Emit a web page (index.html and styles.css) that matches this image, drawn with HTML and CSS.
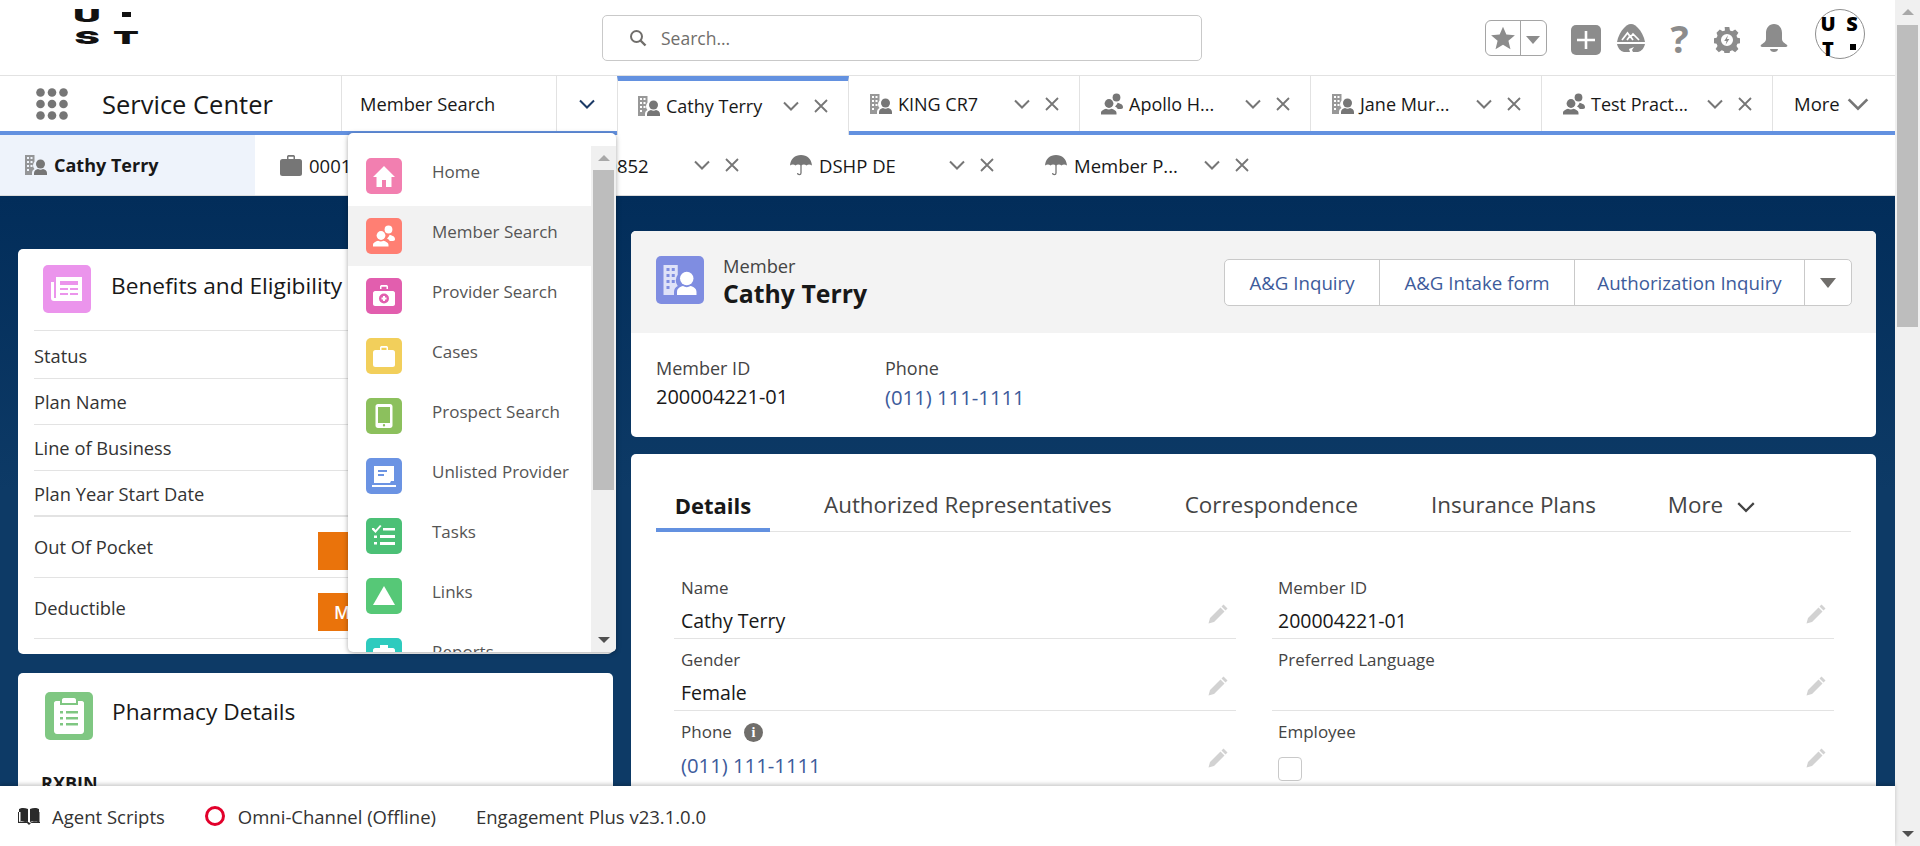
FILE: index.html
```html
<!DOCTYPE html>
<html lang="en">
<head>
<title>Service Center</title>
<meta charset="utf-8" />
<link rel="stylesheet" href="styles.css">
</head>
<body>
<!-- shared icons -->
<svg class="defs" width="0" height="0">
  <symbol id="i-member" viewBox="0 0 24 24"><path opacity=".75" fill-rule="evenodd" d="M1 2h9.500v6.500a6 6 0 0 0 0 7.500c-1.500.7-2.500 2-2.500 4v2H1zM3 4v2h2V4zM6.500 4v2h2V4zM3 8v2h2V8zM6.500 8v2h2V8zM3 12v2h2v-2zM6.500 12v2h2v-2zM3 16v2h2v-2z"/><circle cx="16.500" cy="11" r="4.500"/><path d="M10 22v-2c0-2.500 2-3.500 4-4 1.500 1 3.500 1 5 0 2 .5 4 1.500 4 4v2z"/></symbol>
  <symbol id="i-people" viewBox="0 0 24 24"><circle cx="16.500" cy="5.500" r="3.900"/><path d="M17.500 10.800c2 .9 5.500 1 5.500 4.500 0 1-.7 1.700-2 1.700h-3.200c-.6-1.100-1.600-2-2.800-2.600.9-.8 2.300-2 2.500-3.600z"/><circle cx="9" cy="11.500" r="4.400"/><path d="M1 22.500V21c0-2.800 3-3.500 5-4.300 1.800 1 3.800 1 5.500 0 2 .8 5 1.500 5 4.300v1.500z"/></symbol>
  <symbol id="i-umbrella" viewBox="0 0 24 24"><path d="M12 2C6 2 1.500 6 1 12.500c2-1.500 4-1.500 5.500 0 1.500-1.500 3.500-1.500 5.500 0 2-1.500 4-1.500 5.500 0 1.500-1.500 3.500-1.500 5.500 0C22.500 6 18 2 12 2z"/><path d="M12 12v8a1.700 1.700 0 0 1-3.400 0" fill="none" stroke="currentColor" stroke-width="1.300"/></symbol>
  <symbol id="i-case" viewBox="0 0 24 24"><path d="M8 6V3.500C8 2.500 9 2 10 2h4c1 0 2 .5 2 1.500V6h-1.500V3.700h-5V6z"/><rect x="1" y="6" width="22" height="17" rx="2.500"/></symbol>
  <symbol id="i-chevron" viewBox="0 0 18 18"><path d="M2 5.500l7 7 7-7" fill="none" stroke="currentColor" stroke-width="2"/></symbol>
  <symbol id="i-close" viewBox="0 0 14 14"><path d="M1 1l12 12M13 1L1 13" fill="none" stroke="currentColor" stroke-width="1.800"/></symbol>
  <symbol id="i-pencil" viewBox="0 0 22 22"><path d="M16.500 1.500l4 4-2 2-4-4zM13.500 4.500l4 4L7 19l-5.500 1.500L3 15z"/></symbol>
</svg>

<div class="page">
  <div class="app">
    <header class="topbar">
      <div class="logo">
        <span>U</span><i></i>
        <span>S</span><span>T</span>
      </div>
      <label class="search">
        <svg width="18" height="18" viewBox="0 0 18 18"><circle cx="7.500" cy="7.500" r="5.500" fill="none" stroke="#706e6b" stroke-width="2"/><path d="M11.500 11.500l5 5" stroke="#706e6b" stroke-width="2.400"/></svg>
        <span>Search...</span>
      </label>
      <div class="tools">
        <div class="fav">
          <span class="fav-star"><svg width="26" height="26" viewBox="0 0 24 24"><path fill="#8c8c8c" d="M12 1.500l3.100 7.300 7.900.6-6 5.200 1.900 7.700L12 18.200l-6.900 4.100L7 14.600 1 9.400l7.900-.6z"/></svg></span>
          <span class="fav-caret"></span>
        </div>
        <svg class="tool-plus" width="30" height="30" viewBox="0 0 30 30"><rect width="30" height="30" rx="5" fill="#8c8c8c"/><path d="M15 6v18M6 15h18" stroke="#fff" stroke-width="2.600"/></svg>
        <svg class="tool-trail" width="28" height="28" viewBox="0 0 28 28"><path fill="#8c8c8c" d="M14 0c3 0 5 2 7 4 3 3 6 8 7 14H0C1 12 4 7 7 4c2-2 4-4 7-4z"/><path d="M5 16l5.500-7 3 4 2.500-3 6 6M10 16l3-4 3 4" fill="none" stroke="#fff" stroke-width="1.700"/><path fill="#8c8c8c" d="M0 20h28c-1 4-3 7-7 8h-5l-1-2 2-3-5 2 1 3H7c-4-1-6-4-7-8z"/></svg>
        <span class="tool-help">?</span>
        <svg class="tool-gear" width="26" height="26" viewBox="0 0 28 28"><path fill="#8c8c8c" fill-rule="evenodd" d="M11.500 0h5l.7 3.700 2.400 1 3.200-2.100 3.500 3.500-2.100 3.200 1 2.400 3.700.7v5l-3.700.7-1 2.400 2.100 3.200-3.500 3.500-3.200-2.100-2.400 1-.7 3.700h-5l-.7-3.700-2.400-1-3.200 2.100-3.500-3.500 2.100-3.200-1-2.400-3.700-.7v-5l3.700-.7 1-2.400L2.700 6.100l3.500-3.500 3.200 2.100 2.400-1zM14 7.500a6.500 6.500 0 1 0 0 13 6.500 6.500 0 0 0 0-13z"/><path fill="#8c8c8c" d="M15 9l-4 6h2.500l-1 4 4-6H14z"/></svg>
        <svg class="tool-bell" width="28" height="28" viewBox="0 0 28 28"><path fill="#8c8c8c" d="M14 0c5 0 8 4 8 9v6c0 3 3 4 5 6 1 1 0 2-1 2H2c-1 0-2-1-1-2 2-2 5-3 5-6V9c0-5 3-9 8-9zM10 25h8c0 2-2 3-4 3s-4-1-4-3z"/></svg>
        <div class="avatar"><span>U</span><span>S</span><span>T</span><i></i></div>
      </div>
    </header>

    <nav class="navbar">
      <div class="launcher">
        <svg width="32" height="32" viewBox="0 0 32 32" fill="#767676">
          <circle cx="4.500" cy="4.500" r="4.300"/><circle cx="16" cy="4.500" r="4.300"/><circle cx="27.500" cy="4.500" r="4.300"/>
          <circle cx="4.500" cy="16" r="4.300"/><circle cx="16" cy="16" r="4.300"/><circle cx="27.500" cy="16" r="4.300"/>
          <circle cx="4.500" cy="27.500" r="4.300"/><circle cx="16" cy="27.500" r="4.300"/><circle cx="27.500" cy="27.500" r="4.300"/>
        </svg>
        <span class="app-name">Service Center</span>
      </div>
      <div class="nav-select">Member Search</div>
      <div class="nav-toggle"><svg class="chev-navy" width="18" height="18"><use href="#i-chevron"/></svg></div>
      <div class="tab tab-active"><svg class="tab-ico"><use href="#i-member"/></svg><span class="tab-name">Cathy Terry</span><svg class="tab-chev"><use href="#i-chevron"/></svg><svg class="tab-x"><use href="#i-close"/></svg></div>
      <div class="tab"><svg class="tab-ico"><use href="#i-member"/></svg><span class="tab-name">KING CR7</span><svg class="tab-chev"><use href="#i-chevron"/></svg><svg class="tab-x"><use href="#i-close"/></svg></div>
      <div class="tab"><svg class="tab-ico"><use href="#i-people"/></svg><span class="tab-name">Apollo H...</span><svg class="tab-chev"><use href="#i-chevron"/></svg><svg class="tab-x"><use href="#i-close"/></svg></div>
      <div class="tab"><svg class="tab-ico"><use href="#i-member"/></svg><span class="tab-name">Jane Mur...</span><svg class="tab-chev"><use href="#i-chevron"/></svg><svg class="tab-x"><use href="#i-close"/></svg></div>
      <div class="tab"><svg class="tab-ico"><use href="#i-people"/></svg><span class="tab-name">Test Pract...</span><svg class="tab-chev"><use href="#i-chevron"/></svg><svg class="tab-x"><use href="#i-close"/></svg></div>
      <div class="nav-more">More <svg width="24" height="24"><use href="#i-chevron"/></svg></div>
    </nav>

    <nav class="subnav">
      <div class="subtab subtab-active"><svg class="tab-ico"><use href="#i-member"/></svg><span class="tab-name">Cathy Terry</span></div>
      <div class="subtab"><svg class="tab-ico"><use href="#i-case"/></svg><span class="tab-name">00010852</span><svg class="tab-chev"><use href="#i-chevron"/></svg><svg class="tab-x"><use href="#i-close"/></svg></div>
      <div class="subtab"><svg class="tab-ico"><use href="#i-case"/></svg><span class="tab-name">00010852</span><svg class="tab-chev"><use href="#i-chevron"/></svg><svg class="tab-x"><use href="#i-close"/></svg></div>
      <div class="subtab"><svg class="tab-ico"><use href="#i-umbrella"/></svg><span class="tab-name">DSHP DE</span><svg class="tab-chev"><use href="#i-chevron"/></svg><svg class="tab-x"><use href="#i-close"/></svg></div>
      <div class="subtab"><svg class="tab-ico"><use href="#i-umbrella"/></svg><span class="tab-name">Member P...</span><svg class="tab-chev"><use href="#i-chevron"/></svg><svg class="tab-x"><use href="#i-close"/></svg></div>
    </nav>

    <main class="content">
      <div class="col-left">
        <section class="card benefits">
          <div class="card-head">
            <span class="badge badge-benefits">
              <svg width="32" height="32" viewBox="0 0 32 32" fill="#fff"><path fill-rule="evenodd" d="M6 3h26v24H4a3 3 0 0 1-3-3V8h3v16h2zM10 7v4h18V7zM10 14v2h8v-2zM20 14v2h8v-2zM10 19v2h8v-2zM20 19v2h8v-2z" transform="translate(-1 1)"/></svg>
            </span>
            <h2>Benefits and Eligibility</h2>
          </div>
          <div class="row r-status">Status</div>
          <div class="row r-plan">Plan Name</div>
          <div class="row r-plan">Line of Business</div>
          <div class="row r-plan r-last">Plan Year Start Date</div>
          <div class="row r-cost">Out Of Pocket<span class="cost"></span></div>
          <div class="row r-cost">Deductible<span class="cost">Member</span></div>
        </section>
        <section class="card pharmacy">
          <div class="card-head">
            <span class="badge badge-pharmacy">
              <svg width="32" height="36" viewBox="0 0 32 36" fill="#fff"><path fill-rule="evenodd" d="M11 0h10c1.500 0 2 1 2 2v3H9V2c0-1 .5-2 2-2zM3 3h4v4h18V3h4c1 0 2 1 2 2v28c0 1.500-1 3-3 3H4c-2 0-3-1.500-3-3V5c0-1 1-2 2-2zM7 13v2.500h3V13zM13 13v2.500h12V13zM7 19v2.500h3V19zM13 19v2.500h12V19zM7 25v2.500h3V25zM13 25v2.500h12V25z"/></svg>
            </span>
            <h2>Pharmacy Details</h2>
          </div>
          <div class="rx">RXBIN</div>
        </section>
      </div>

      <div class="col-right">
        <section class="card record">
          <div class="record-head">
            <span class="badge badge-member"><svg width="36" height="36" fill="#fff"><use href="#i-member"/></svg></span>
            <div class="record-title">
              <div class="record-type">Member</div>
              <div class="record-name">Cathy Terry</div>
            </div>
            <div class="actions">
              <a class="act act-1">A&amp;G Inquiry</a>
              <a class="act act-2">A&amp;G Intake form</a>
              <a class="act act-3">Authorization Inquiry</a>
              <span class="act-more"></span>
            </div>
          </div>
          <div class="record-info">
            <div class="info-id"><div class="info-label">Member ID</div><div class="info-value">200004221-01</div></div>
            <div><div class="info-label">Phone</div><div class="info-value link">(011) 111-1111</div></div>
          </div>
        </section>

        <section class="card details">
          <div class="detail-tabs">
            <span class="dtab dtab-active">Details</span>
            <span class="dtab dtab-auth">Authorized Representatives</span>
            <span class="dtab dtab-corr">Correspondence</span>
            <span class="dtab dtab-ins">Insurance Plans</span>
            <span class="dtab dtab-more">More <svg width="20" height="20"><use href="#i-chevron"/></svg></span>
          </div>
          <div class="fields">
            <div class="field"><div class="f-label">Name</div><div class="f-value">Cathy Terry</div><svg class="pencil"><use href="#i-pencil"/></svg></div>
            <div class="field"><div class="f-label">Member ID</div><div class="f-value">200004221-01</div><svg class="pencil"><use href="#i-pencil"/></svg></div>
            <div class="field"><div class="f-label">Gender</div><div class="f-value">Female</div><svg class="pencil"><use href="#i-pencil"/></svg></div>
            <div class="field"><div class="f-label">Preferred Language</div><div class="f-value"></div><svg class="pencil"><use href="#i-pencil"/></svg></div>
            <div class="field"><div class="f-label">Phone <span class="info-dot">i</span></div><div class="f-value link">(011) 111-1111</div><svg class="pencil"><use href="#i-pencil"/></svg></div>
            <div class="field"><div class="f-label">Employee</div><div class="f-value"><span class="check"></span></div><svg class="pencil"><use href="#i-pencil"/></svg></div>
          </div>
        </section>
      </div>
    </main>

    <footer class="utility">
      <span class="util util-scripts">
        <svg width="22" height="20" viewBox="0 0 22 20" fill="#2b2b2b"><path d="M1 3c2-1.500 6-1.500 9 0v13c-3-1.500-7-1.500-9 0zM12 3c3-1.500 7-1.500 9 0v13c-2-1.500-6-1.500-9 0zM0 6v11h9l2 2 2-2h9V6h-.5v10c-3-1-7-1-9.500 1-2.500-2-6.500-2-9.500-1V6z"/></svg>
        Agent Scripts
      </span>
      <span class="util util-omni"><i class="offline"></i>Omni-Channel (Offline)</span>
      <span class="util">Engagement Plus v23.1.0.0</span>
    </footer>

    <!-- open nav menu, lies over the page -->
    <div class="menu">
      <ul class="menu-list">
        <li class="menu-item"><span class="mi c-home"><svg width="24" height="24" viewBox="0 0 24 24" fill="#fff"><path d="M12 2L1 13h3.500v10H10v-7h4v7h5.500V13H23z"/></svg></span>Home</li>
        <li class="menu-item menu-item-on"><span class="mi c-member"><svg width="24" height="24" fill="#fff"><use href="#i-people"/></svg></span>Member Search</li>
        <li class="menu-item"><span class="mi c-provider"><svg width="24" height="24" viewBox="0 0 24 24" fill="#fff"><path fill-rule="evenodd" d="M8 5V2.500C8 1.500 9 1 10 1h4c1 0 2 .5 2 1.500V5h-1.500V2.800h-5V5zM3 7h18c1 0 2 1 2 2v11c0 1-1 2-2 2H3c-1 0-2-1-2-2V9c0-1 1-2 2-2zM12 9.500a5 5 0 1 0 0 10 5 5 0 0 0 0-10zM11 12h2v1.500h1.500v2H13V17h-2v-1.500H9.500v-2H11z"/></svg></span>Provider Search</li>
        <li class="menu-item"><span class="mi c-cases"><svg width="24" height="24" fill="#fff"><use href="#i-case"/></svg></span>Cases</li>
        <li class="menu-item"><span class="mi c-prospect"><svg width="24" height="24" viewBox="0 0 24 24" fill="#fff"><path fill-rule="evenodd" d="M6 0h12c1.500 0 2.500 1 2.500 2.500v19c0 1.500-1 2.500-2.500 2.500H6c-1.500 0-2.500-1-2.500-2.500v-19C3.500 1 4.500 0 6 0zM6 3v16h12V3zM12 20a1.200 1.200 0 1 0 0 2.400 1.200 1.200 0 0 0 0-2.400z"/></svg></span>Prospect Search</li>
        <li class="menu-item"><span class="mi c-unlisted"><svg width="24" height="24" viewBox="0 0 24 24" fill="#fff"><path fill-rule="evenodd" d="M2 2h20v15h-3l-1 2H2zM6 6v2h9V6zM6 10v2h6v-2zM0 21h24v2H0z"/></svg></span>Unlisted Provider</li>
        <li class="menu-item"><span class="mi c-tasks"><svg width="24" height="24" viewBox="0 0 24 24" fill="#fff"><path d="M0 4l2 0 1.500 2L8 1l1.500 1-6 7L0 5.500zM11 4h12v2.500H11zM2 11.500h3V14H2zM8 11h15v3H8zM2 18h3v2.500H2zM8 18h15v3H8z"/></svg></span>Tasks</li>
        <li class="menu-item"><span class="mi c-links"><svg width="24" height="22" viewBox="0 0 24 22" fill="#fff"><path d="M12 1l11 19H1z"/></svg></span>Links</li>
        <li class="menu-item"><span class="mi c-reports"><svg width="24" height="24" viewBox="0 0 24 24" fill="#fff"><path d="M8 1h8v3H8zM3 4h18c1 0 2 1 2 2v14c0 1-1 2-2 2H3c-1 0-2-1-2-2V6c0-1 1-2 2-2z"/></svg></span>Reports</li>
      </ul>
      <div class="menu-scroll">
        <span class="arrow-up"></span>
        <span class="menu-thumb"></span>
        <span class="arrow-down"></span>
      </div>
    </div>
  </div>

  <aside class="pagebar">
    <span class="arrow-up"></span>
    <span class="pagebar-thumb"></span>
    <span class="arrow-down"></span>
  </aside>
</div>
</body>
</html>
```

FILE: styles.css
```css
*{
  margin:0;
  padding:0;
  box-sizing:border-box;
}
html,body{
  height:100%;
  overflow:hidden;
}
body{
  font-family:"Open Sans","Noto Sans","Liberation Sans",sans-serif;
  font-size:16px;
  color:#181818;
  background:#fff;
}
.defs{
  position:absolute;
}
.page{
  display:flex;
  height:846px;
}
.app{
  position:relative;
  flex:1;
  min-width:0;
  display:flex;
  flex-direction:column;
}

/* top bar */
.topbar{
  height:75px;
  display:flex;
  align-items:flex-start;
  background:#fff;
  flex:none;
}
.logo{
  display:grid;
  grid-template-columns:22px 22px;
  column-gap:17px;
  row-gap:8px;
  margin:9px 0 0 76px;
  width:526px;
  font-family:"Inter","Liberation Sans",sans-serif;
  font-weight:900;
  font-size:18px;
  line-height:14px;
  color:#111;
  text-align:center;
}
.logo span{
  display:block;
  transform:scaleX(2.1);
}
.logo i{
  width:9px;
  height:5px;
  background:#111;
  margin:3px 0 0 7px;
}
.search{
  margin:15px 0 0 0;
  width:600px;
  height:46px;
  border:1px solid #c9c9c9;
  border-radius:5px;
  display:flex;
  align-items:center;
  gap:14px;
  padding-left:26px;
  color:#706e6b;
  font-size:17.500px;
}
.tools{
  flex:1;
  position:relative;
  display:flex;
  align-items:flex-start;
}
.fav{
  margin:20px 0 0 283px;
  width:62px;
  height:36px;
  border:1px solid #a5a5a5;
  border-radius:6px;
  display:flex;
}
.fav-star{
  width:35px;
  display:flex;
  align-items:center;
  justify-content:center;
  border-right:1px solid #a5a5a5;
}
.fav-caret{
  flex:1;
  position:relative;
}
.fav-caret::after{
  content:"";
  position:absolute;
  left:5px;
  top:15px;
  border:7px solid transparent;
  border-top:8px solid #8c8c8c;
  border-bottom:0;
}
.tool-plus{
  margin:25px 0 0 24px;
}
.tool-trail{
  margin:24px 0 0 16px;
}
.tool-help{
  width:21px;
  margin:13px 0 0 24px;
  font-size:38px;
  line-height:50px;
  font-weight:700;
  color:#8c8c8c;
  text-align:center;
}
.tool-gear{
  margin:27px 0 0 24px;
}
.tool-bell{
  margin:24px 0 0 20px;
}
.avatar{
  margin:9px 0 0 27px;
  width:50px;
  height:50px;
  border:1px solid #8f8f8f;
  border-radius:50%;
  display:grid;
  grid-template-columns:24px 24px;
  padding-top:1px;
  font-weight:800;
  font-size:20px;
  line-height:25px;
  color:#000;
  text-align:center;
}
.avatar i{
  width:6px;
  height:6px;
  background:#000;
  margin:8px 0 0 10px;
}

/* main nav with workspace tabs */
.navbar{
  flex:none;
  height:60px;
  display:flex;
  border-top:1px solid #e2e2e2;
  border-bottom:4px solid #6391e0;
  background:#fff;
}
.launcher{
  width:341px;
  display:flex;
  align-items:center;
  padding-left:36px;
  gap:34px;
}
.app-name{
  font-size:25.500px;
}
.nav-select{
  width:216px;
  border-left:1px solid #e2e2e2;
  border-right:1px solid #e2e2e2;
  padding-left:18px;
  line-height:55px;
  font-size:18.300px;
}
.nav-toggle{
  width:60px;
  display:flex;
  align-items:center;
  justify-content:center;
}
.chev-navy{
  color:#1b3a66;
}
.tab{
  width:231px;
  display:flex;
  align-items:center;
  padding:0 20px;
  border-right:1px solid #e2e2e2;
  font-size:18px;
}
.tab-active{
  width:232px;
  height:59px;
  border-top:5px solid #6391e0;
  border-left:1px solid #e2e2e2;
  background:#fff;
  padding:0 20px 4px 19px;
  position:relative;
}
.tab-ico{
  width:24px;
  height:24px;
  flex:none;
  fill:#767676;
  color:#767676;
  margin-right:5px;
}
.tab-name{
  flex:1;
  white-space:nowrap;
}
.tab-chev{
  width:18px;
  height:18px;
  flex:none;
  color:#767676;
}
.tab-x{
  width:14px;
  height:14px;
  flex:none;
  color:#767676;
  margin-left:14px;
}
.nav-more{
  flex:1;
  display:flex;
  align-items:center;
  gap:6px;
  padding-left:21px;
  font-size:18.500px;
}
.nav-more svg{
  color:#767676;
}

/* record sub tabs */
.subnav{
  flex:none;
  height:61px;
  display:flex;
  border-bottom:1px solid #dcdcdc;
  background:#fff;
}
.subtab{
  width:255px;
  display:flex;
  align-items:center;
  padding:0 26px 0 24px;
  font-size:18.500px;
}
.subtab .tab-ico{
  margin-right:6px;
}
.subtab-active{
  background:#eef3fb;
  font-weight:700;
  font-size:18px;
}

/* page body */
.content{
  flex:1;
  min-height:0;
  overflow:hidden;
  display:flex;
  gap:18px;
  padding:35px 19px 0 18px;
  background:linear-gradient(#022d5a,#0d3a66 50%);
}
.col-left{
  width:595px;
  flex:none;
  padding-top:18px;
  display:flex;
  flex-direction:column;
  gap:19px;
}
.col-right{
  flex:1;
  display:flex;
  flex-direction:column;
  gap:17px;
}
.card{
  flex:none;
  background:#fff;
  border-radius:5px;
}
.card-head{
  display:flex;
  align-items:flex-start;
}
.card-head h2{
  font-size:22.700px;
  font-weight:400;
  line-height:30px;
}
.badge{
  flex:none;
  width:48px;
  height:48px;
  border-radius:5px;
  display:flex;
  align-items:center;
  justify-content:center;
}
.badge-benefits{
  background:#eb94ec;
}
.badge-pharmacy{
  background:#7fc782;
}
.badge-member{
  background:#7f8de1;
}
.benefits{
  height:405px;
  padding:16px 0 0 16px;
}
.benefits .card-head{
  height:66px;
  padding-left:9px;
  gap:20px;
  border-bottom:1px solid #e3e3e3;
}
.benefits .card-head h2{
  margin-top:6px;
}
.row{
  display:flex;
  align-items:center;
  border-bottom:1px solid #e3e3e3;
  color:#333;
  font-size:18.300px;
}
.r-status{
  height:48px;
  padding-top:2px;
}
.r-plan{
  height:46px;
}
.r-last{
  border-bottom:2px solid #e3e3e3;
}
.r-cost{
  height:61px;
  padding-bottom:2px;
  position:relative;
}
.cost{
  position:absolute;
  left:284px;
  top:15px;
  width:200px;
  height:38px;
  background:#ea730b;
  color:#fff;
  font-weight:600;
  font-size:18px;
  line-height:38px;
  padding-left:16px;
}
.pharmacy{
  height:200px;
  padding:19px 0 0 27px;
}
.pharmacy .card-head{
  gap:19px;
}
.pharmacy .card-head h2{
  margin-top:5px;
}
.rx{
  margin:31px 0 0 -4px;
  font-size:18px;
  font-weight:700;
}

/* record header */
.record{
  height:206px;
  overflow:hidden;
}
.record-head{
  height:102px;
  background:#f3f3f3;
  display:flex;
  align-items:flex-start;
  padding:25px 24px 0 25px;
}
.record-title{
  margin-left:19px;
  margin-top:-1px;
  flex:1;
}
.record-type{
  font-size:18.300px;
  line-height:22px;
  color:#444;
}
.record-name{
  font-size:24.800px;
  font-weight:700;
  line-height:32px;
}
.actions{
  display:flex;
  height:47px;
  margin-top:3px;
  background:#fff;
  border:1px solid #c9c9c9;
  border-radius:5px;
  font-size:18.700px;
  color:#3d5b9b;
}
.act{
  display:flex;
  align-items:center;
  justify-content:center;
  border-right:1px solid #c9c9c9;
}
.act-1{
  width:155px;
}
.act-2{
  width:195px;
}
.act-3{
  width:230px;
}
.act-more{
  width:46px;
  position:relative;
}
.act-more::after{
  content:"";
  position:absolute;
  left:15px;
  top:18px;
  border:8px solid transparent;
  border-top:10px solid #706e6b;
  border-bottom:0;
}
.record-info{
  display:flex;
  padding:24px 0 0 25px;
}
.info-id{
  width:229px;
}
.info-label{
  font-size:18px;
  line-height:22px;
  color:#444;
}
.info-value{
  font-size:20px;
  line-height:30px;
  margin-top:3px;
}
.link{
  color:#3d5b9b;
}
.info-value.link{
  font-size:20.300px;
}

/* details */
.details{
  height:500px;
  padding:0 25px;
}
.detail-tabs{
  height:78px;
  display:flex;
  align-items:flex-start;
  border-bottom:1px solid #e3e3e3;
  font-size:22.400px;
  color:#444;
}
.dtab{
  display:block;
  padding-top:36px;
  line-height:30px;
  white-space:nowrap;
}
.dtab-active{
  width:114px;
  height:78px;
  text-align:center;
  font-weight:700;
  font-size:22px;
  color:#181818;
  border-bottom:4px solid #6391e0;
}
.dtab-auth{
  margin-left:54px;
}
.dtab-corr{
  margin-left:73px;
}
.dtab-ins{
  margin-left:73px;
}
.dtab-more{
  margin-left:72px;
}
.dtab-more svg{
  margin-left:7px;
  vertical-align:-4px;
}
.fields{
  display:grid;
  grid-template-columns:562px 562px;
  column-gap:36px;
  margin:35px 0 0 18px;
}
.field{
  position:relative;
  height:72px;
  padding:0 7px;
  border-bottom:1px solid #e3e3e3;
}
.field:nth-child(even){
  padding-left:6px;
}
.field:nth-child(n+5){
  border-bottom:0;
}
.f-label{
  display:flex;
  align-items:center;
  gap:12px;
  font-size:17px;
  line-height:24px;
  color:#444;
  padding-top:9px;
}
.f-value{
  font-size:19.500px;
  line-height:30px;
  margin-top:6px;
  min-height:30px;
}
.f-value.link{
  font-size:20.300px;
}
.pencil{
  position:absolute;
  right:7px;
  top:36px;
  width:22px;
  height:22px;
  fill:#d2d2d2;
}
.info-dot{
  width:19px;
  height:19px;
  border-radius:50%;
  background:#706e6b;
  color:#fff;
  font-family:"Liberation Serif",serif;
  font-weight:700;
  font-size:14px;
  line-height:19px;
  text-align:center;
}
.check{
  display:block;
  width:24px;
  height:24px;
  margin-top:13px;
  border:1px solid #c9c9c9;
  border-radius:4px;
  background:#fff;
}

/* utility bar */
.utility{
  flex:none;
  height:60px;
  display:flex;
  align-items:center;
  padding-left:18px;
  background:#fff;
  box-shadow:0 -2px 4px rgba(0,0,0,.2);
  position:relative;
  font-size:18.500px;
  color:#333;
}
.util{
  display:flex;
  align-items:center;
}
.util-scripts{
  gap:12px;
  margin-right:40px;
}
.util-omni{
  margin-right:40px;
}
.offline{
  width:20px;
  height:20px;
  border:3px solid #e2002b;
  border-radius:50%;
  margin-right:13px;
}

/* nav menu */
.menu{
  position:absolute;
  left:348px;
  top:133px;
  width:268px;
  height:519px;
  display:flex;
  background:#fff;
  border-radius:5px;
  box-shadow:0 1px 5px rgba(0,0,0,.35);
  overflow:hidden;
  z-index:5;
}
.menu-list{
  flex:1;
  min-width:0;
  list-style:none;
  padding-top:13px;
}
.menu-item{
  height:60px;
  display:flex;
  align-items:flex-start;
  gap:30px;
  padding-left:18px;
  font-size:17px;
  line-height:52px;
  color:#555;
}
.menu-item-on{
  background:#f2f2f2;
}
.mi{
  flex:none;
  width:36px;
  height:36px;
  margin-top:12px;
  border-radius:5px;
  display:flex;
  align-items:center;
  justify-content:center;
}
.c-home{background:#f27fb0;}
.c-member{background:#ff7f73;}
.c-provider{background:#e25eae;}
.c-cases{background:#f2cf5b;}
.c-prospect{background:#8cc05d;}
.c-unlisted{background:#6b93e3;}
.c-tasks{background:#4bc076;}
.c-links{background:#56c877;}
.c-reports{background:#2ecbbe;}
.menu-scroll{
  flex:none;
  width:25px;
  margin-top:13px;
  background:#f0f0f0;
  display:flex;
  flex-direction:column;
  align-items:center;
}
.menu-thumb{
  width:21px;
  height:320px;
  margin-top:9px;
  background:#bdbdbd;
}
.arrow-up,.arrow-down{
  display:block;
  border:6px solid transparent;
  flex:none;
}
.arrow-up{
  margin-top:9px;
  border-bottom:6px solid #a8a8a8;
  border-top:0;
}
.arrow-down{
  margin-top:auto;
  margin-bottom:9px;
  border-top:6px solid #505050;
  border-bottom:0;
}

/* page scrollbar */
.pagebar{
  flex:none;
  width:25px;
  background:#f0f0f0;
  display:flex;
  flex-direction:column;
  align-items:center;
}
.pagebar-thumb{
  width:21px;
  height:302px;
  margin-top:10px;
  background:#bdbdbd;
}
```
